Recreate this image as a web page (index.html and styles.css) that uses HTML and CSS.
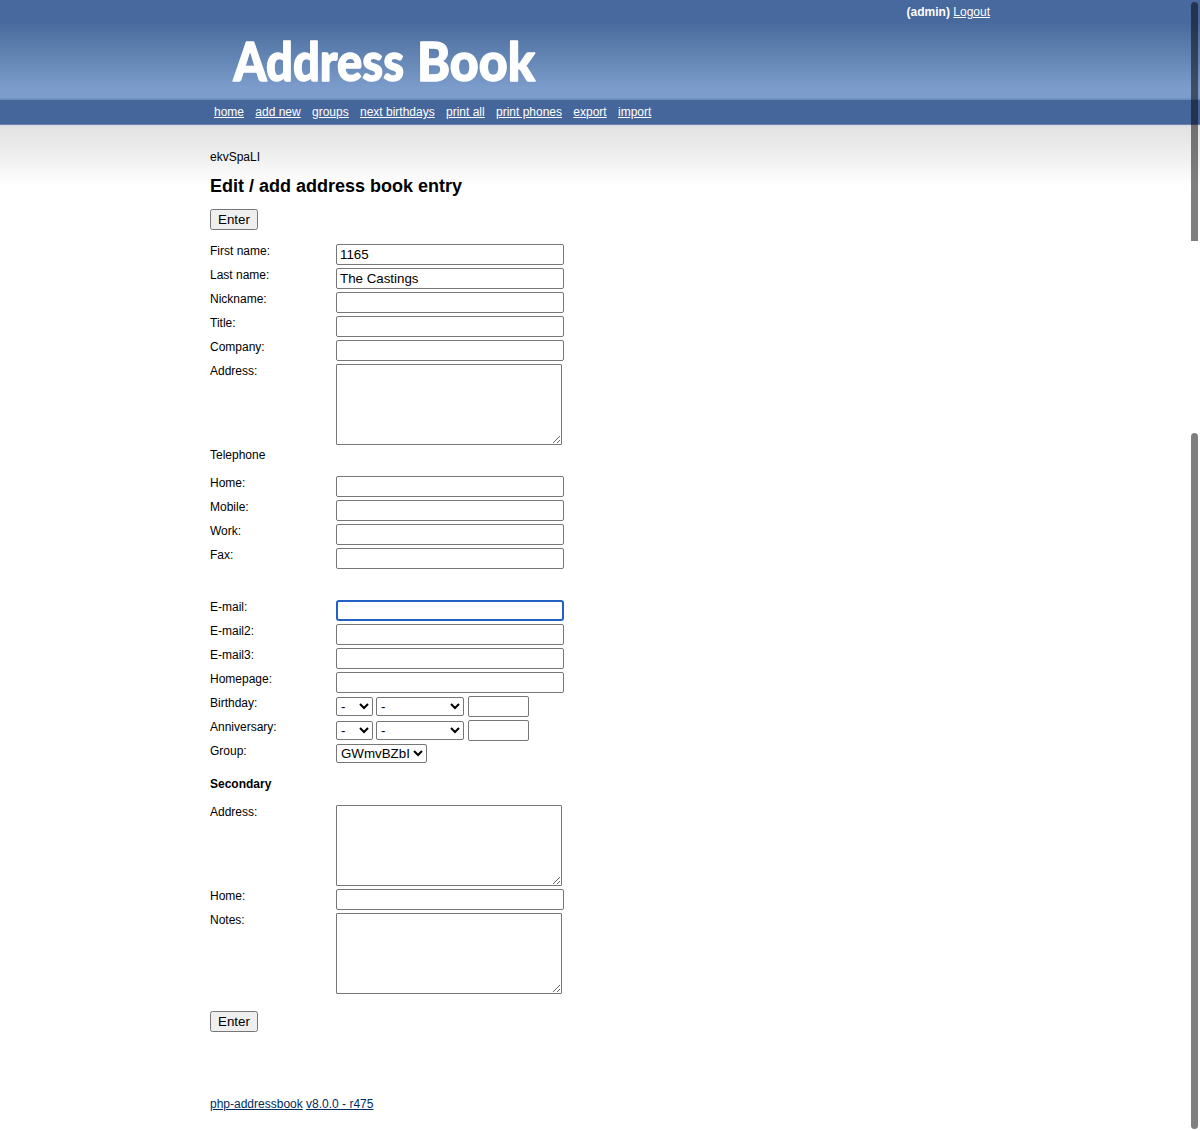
FILE: index.html
```html
<!DOCTYPE html>
<html lang="en">
<head>
<meta charset="utf-8">
<title>Address Book</title>
<link rel="stylesheet" href="styles.css">
</head>
<body>
<header class="top">
  <div class="wrap">
    <div class="account"><b>(admin)</b> <a href="#">Logout</a></div>
    <svg class="logo" width="320" height="60" role="img" aria-label="Address Book">
      <text x="12.5" y="51" textLength="170.5" lengthAdjust="spacingAndGlyphs">Address</text>
      <text x="196" y="51" textLength="118" lengthAdjust="spacingAndGlyphs">Book</text>
    </svg>
  </div>
</header>
<nav class="nav">
  <div class="wrap links">
    <a href="#">home</a><a href="#">add new</a><a href="#">groups</a><a href="#">next birthdays</a><a href="#">print all</a><a href="#">print phones</a><a href="#">export</a><a href="#">import</a>
  </div>
</nav>
<main class="page">
  <div class="wrap">
    <div class="group-name">ekvSpaLI</div>
    <h1>Edit / add address book entry</h1>
    <form>
      <button type="button">Enter</button>
      <div class="rows">
        <div class="row"><label>First name:</label><input class="text" value="1165"></div>
        <div class="row"><label>Last name:</label><input class="text" value="The Castings"></div>
        <div class="row"><label>Nickname:</label><input class="text"></div>
        <div class="row"><label>Title:</label><input class="text"></div>
        <div class="row"><label>Company:</label><input class="text"></div>
        <div class="row tall"><label>Address:</label><textarea></textarea></div>
        <div class="row heading"><label>Telephone</label></div>
        <div class="row"><label>Home:</label><input class="text"></div>
        <div class="row"><label>Mobile:</label><input class="text"></div>
        <div class="row"><label>Work:</label><input class="text"></div>
        <div class="row"><label>Fax:</label><input class="text"></div>
        <div class="row spaced"><label>E-mail:</label><input class="text focused"></div>
        <div class="row"><label>E-mail2:</label><input class="text"></div>
        <div class="row"><label>E-mail3:</label><input class="text"></div>
        <div class="row"><label>Homepage:</label><input class="text"></div>
        <div class="row"><label>Birthday:</label><div class="date"><select class="day"><option>-</option></select><select class="month"><option>-</option></select><input class="year"></div></div>
        <div class="row"><label>Anniversary:</label><div class="date"><select class="day"><option>-</option></select><select class="month"><option>-</option></select><input class="year"></div></div>
        <div class="row"><label>Group:</label><select class="group"><option>GWmvBZbI</option></select></div>
        <div class="row heading secondary"><label>Secondary</label></div>
        <div class="row tall"><label>Address:</label><textarea></textarea></div>
        <div class="row"><label>Home:</label><input class="text"></div>
        <div class="row tall"><label>Notes:</label><textarea></textarea></div>
      </div>
      <button type="button">Enter</button>
    </form>
    <footer><a href="#">php-addressbook</a> <a href="#">v8.0.0 - r475</a></footer>
  </div>
</main>
<div class="thumb thumb-upper"></div>
<div class="thumb thumb-lower"></div>
</body>
</html>
```
FILE: styles.css
```css
* { box-sizing: border-box; }
body {
  margin: 0;
  height: 1131px;
  overflow: hidden;
  position: relative;
  background: #fff;
  color: #000;
  font: 12px/14px "Liberation Sans", Arial, sans-serif;
}
.wrap { width: 780px; margin: 0 auto; }
.top {
  height: 100px;
  background: linear-gradient(#47699d 0, #47699d 22px, #5073a3 33px, #6b8dbc 68px, #7c9dcb 88px, #7c9dcb 98px, #6b8dba 99px);
}
.account { padding-top: 5px; text-align: right; color: #fff; }
.account a, .links a { color: #fff; }
.logo { display: block; margin-top: 11px; margin-left: 11px; overflow: visible; }
.logo text {
  font: 900 54px Lato, sans-serif;
  fill: #fff;
  stroke: #fff;
  stroke-width: 1.4px;
  stroke-linejoin: round;
}
.nav {
  height: 25px;
  background: #45669b;
  border-bottom: 1px solid #6d81a8;
}
.links { display: flex; gap: 11.3px; padding: 5px 0 0 4px; }
.page {
  height: 1006px;
  padding-top: 25px;
  background: linear-gradient(#d8dde6 0, #d8dde6 1px, #e3e3e3 2px, #e8e8e8 16px, #f2f2f2 36px, #fff 61px);
}
h1 { margin: 11px 0 12px; font-size: 18px; line-height: 22px; }
button, input, select, textarea {
  margin: 0;
  color: #000;
  font: 13.333px "Liberation Sans", Arial, sans-serif;
}
button {
  display: block;
  width: 48px;
  height: 21px;
  padding: 0;
  border: 1px solid #767676;
  border-radius: 2.5px;
  background: #efefef;
}
.rows { margin: 14px 0; }
.row { display: grid; grid-template-columns: 126px 1fr; align-items: start; height: 24px; }
.row.tall { height: 84px; }
.row.heading { height: 28px; }
.row.spaced { margin-top: 28px; }
.row.secondary { margin-top: 9px; font-weight: bold; }
input, select, textarea {
  border: 1px solid #767676;
  border-radius: 2px;
  background-color: #fff;
  outline: none;
}
input { height: 21px; padding: 1px 3px; }
.text { width: 228px; }
.focused { border: 2px solid #2160c4; border-radius: 3px; }
textarea { width: 226px; height: 81px; border-radius: 1px; padding: 2px; }
select { height: 19px; padding: 0; }
.date { display: flex; align-items: center; }
.day { width: 37px; margin-right: 3px; }
.month { width: 88px; margin-right: 4px; }
.year { width: 61px; }
.group { width: 91px; }
footer { padding-top: 65px; }
footer a { color: #002b60; }
.thumb { position: absolute; left: 1191px; width: 7px; background: rgba(0, 0, 0, .5); }
.thumb-upper { top: 2px; height: 239px; border-radius: 4px 4px 0 0; }
.thumb-lower { top: 433px; height: 696px; border-radius: 4px; }
```
